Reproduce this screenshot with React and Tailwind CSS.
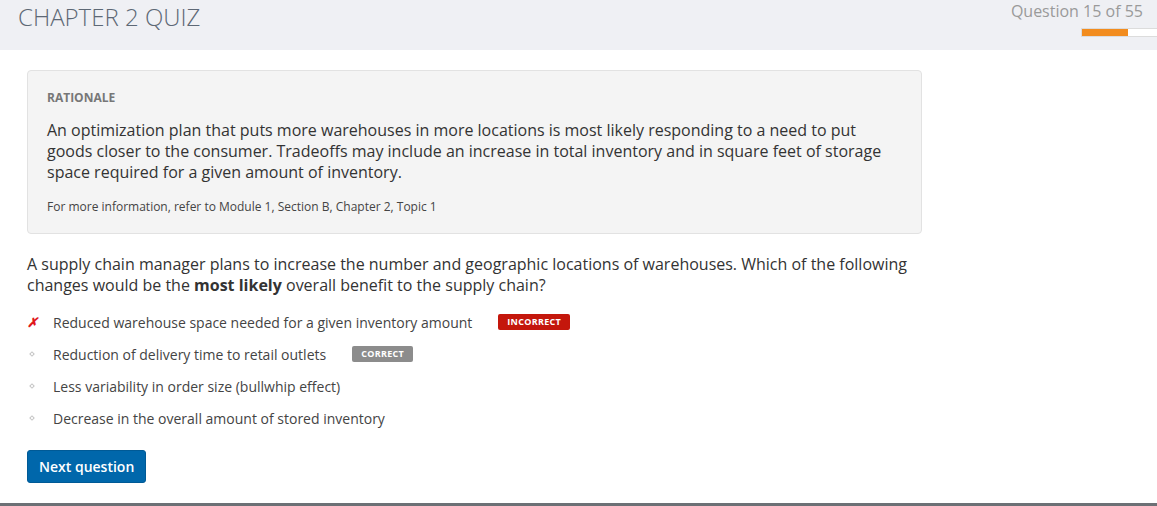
import React from "react";

const options = [
  { text: "Reduced warehouse space needed for a given inventory amount", state: "incorrect" },
  { text: "Reduction of delivery time to retail outlets", state: "correct" },
  { text: "Less variability in order size (bullwhip effect)" },
  { text: "Decrease in the overall amount of stored inventory" },
];

function Marker({ state }) {
  if (state === "incorrect") {
    return <span className="text-[#e0191c] text-[13px] font-bold italic leading-none">✗</span>;
  }
  return <span className="ml-[3px] block w-[4px] h-[4px] rotate-45 border border-[#c4c4c4]" />;
}

function Badge({ children, color }) {
  return (
    <span
      className={`ml-[26px] h-[16px] px-[9px] flex items-center rounded-[2px] text-white text-[9px] font-bold tracking-[0.3px] ${color}`}
    >
      {children}
    </span>
  );
}

export default function App() {
  return (
    <div
      className="h-[506px] flex flex-col bg-white border-b-[3px] border-[#6c7075] text-[#333]"
      style={{ fontFamily: '"Open Sans", "Liberation Sans", sans-serif' }}
    >
      <header className="h-[50px] shrink-0 bg-[#eff0f4] flex justify-between">
        <h1 className="pl-[18px] pt-[1px] text-[24px] leading-[32px] font-light text-[#5d6875]">
          CHAPTER 2 QUIZ
        </h1>
        <div className="flex flex-col items-end">
          <div className="mr-[14px] text-[16px] leading-[22px] text-[#9a9a9a]">Question 15 of 55</div>
          <div className="mt-[6px] w-[76px] h-[9px] bg-white border border-[#dcdcdc] border-r-0">
            <div className="h-full w-[46px] bg-[#f28c1e]" />
          </div>
        </div>
      </header>

      <main className="px-[27px]">
        <section className="mt-[20px] w-[895px] bg-[#f4f4f4] border border-[#e2e2e2] rounded-[4px] px-[19px] pt-[19px] pb-[18px]">
          <div className="text-[12px] leading-[16px] font-bold text-[#777]">RATIONALE</div>
          <p className="mt-[14px] text-[16px] leading-[21px] text-[#333] pr-[20px]">
            An optimization plan that puts more warehouses in more locations is most likely responding to a need to put
            goods closer to the consumer. Tradeoffs may include an increase in total inventory and in square feet of storage
            space required for a given amount of inventory.
          </p>
          <p className="mt-[16px] text-[12px] leading-[16px] text-[#444]">
            For more information, refer to Module 1, Section B, Chapter 2, Topic 1
          </p>
        </section>

        <p className="mt-[20px] w-[895px] text-[16px] leading-[21px] text-[#333]">
          A supply chain manager plans to increase the number and geographic locations of warehouses. Which of the following
          changes would be the <strong className="font-bold">most likely</strong> overall benefit to the supply chain?
        </p>

        <ul className="mt-[10px]">
          {options.map((o) => (
            <li key={o.text} className="h-[32px] flex items-center text-[14px] text-[#444]">
              <span className="w-[26px] flex items-center">
                <Marker state={o.state} />
              </span>
              <span>{o.text}</span>
              {o.state === "incorrect" && <Badge color="bg-[#c4170c]">INCORRECT</Badge>}
              {o.state === "correct" && <Badge color="bg-[#8c8c8c]">CORRECT</Badge>}
            </li>
          ))}
        </ul>

        <button className="mt-[16px] h-[33px] px-[11px] rounded-[3px] bg-[#0067ab] border border-[#005a96] text-white text-[14px] font-semibold">
          Next question
        </button>
      </main>
    </div>
  );
}
